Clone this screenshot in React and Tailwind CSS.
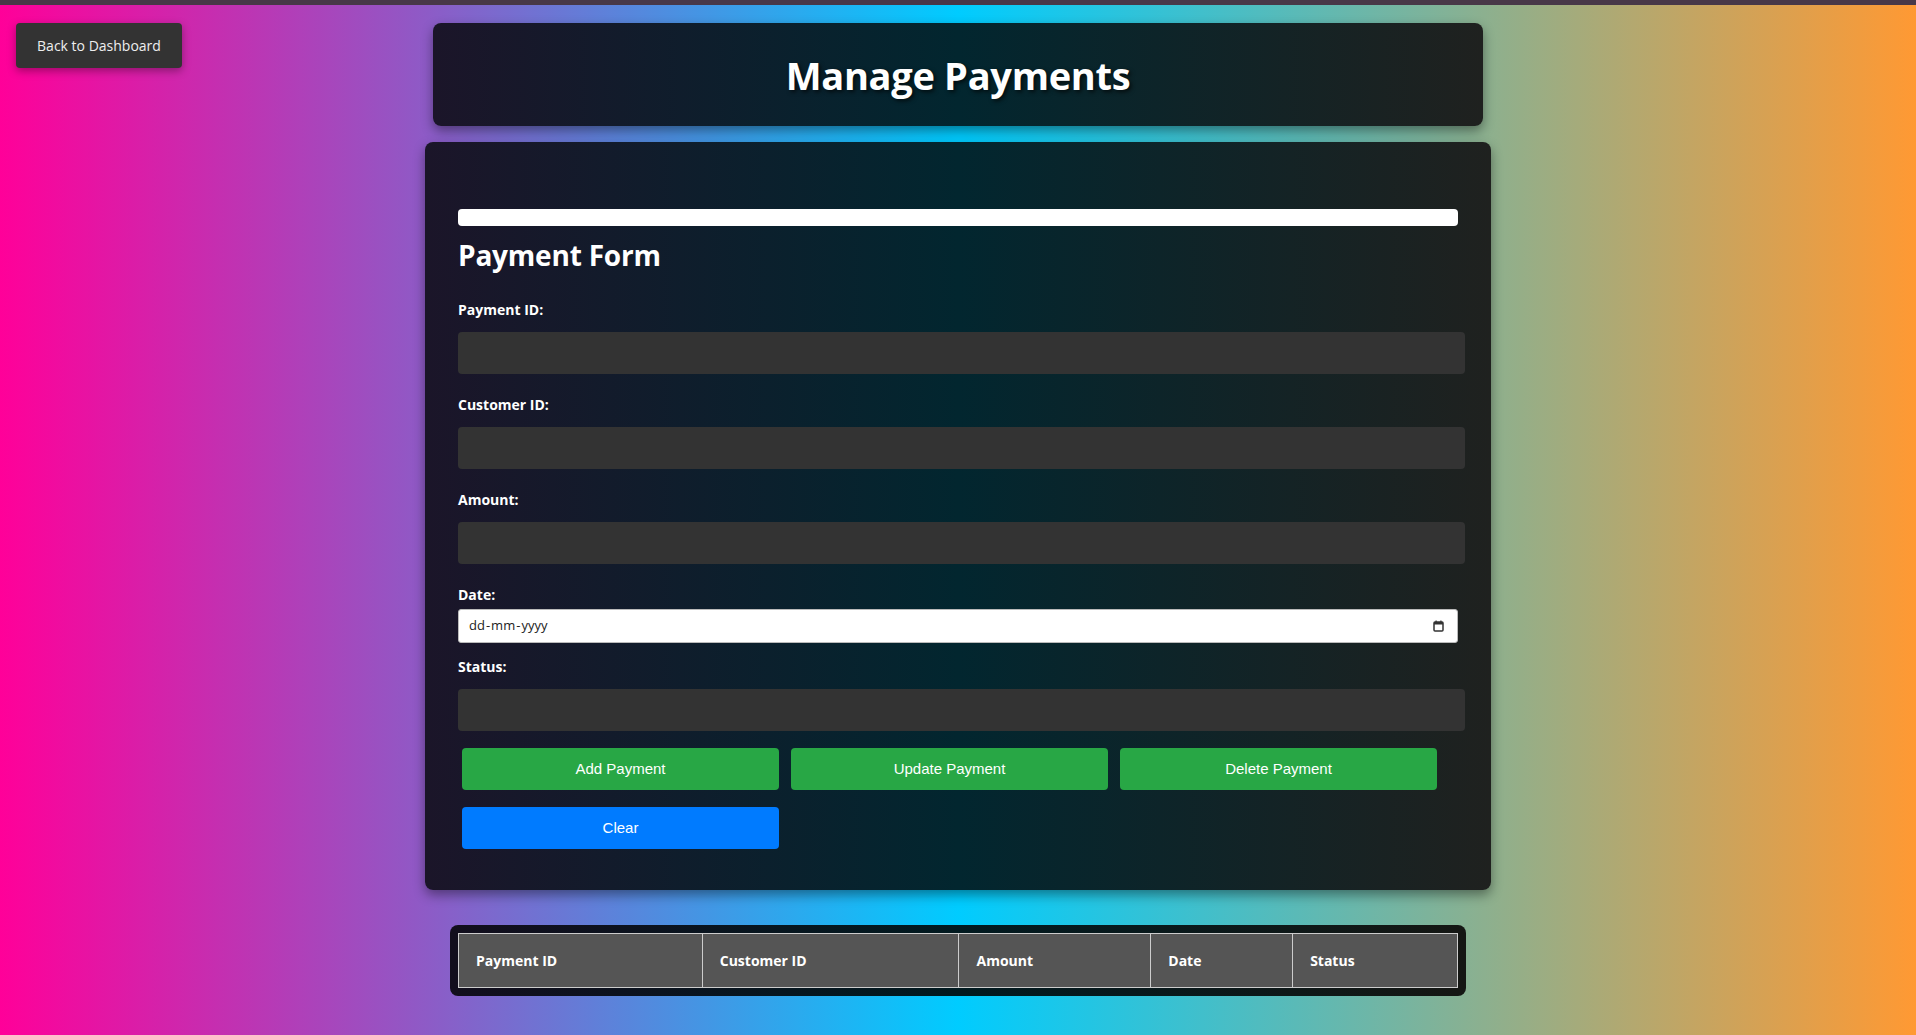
export default function App() {
  const fields = ["Payment ID:", "Customer ID:", "Amount:"]
  const columns = [
    { name: "Payment ID", width: "w-[244px]" },
    { name: "Customer ID", width: "w-[257px]" },
    { name: "Amount", width: "w-[192px]" },
    { name: "Date", width: "w-[142px]" },
    { name: "Status", width: "w-[165px]" },
  ]

  const cardBg =
    "bg-[linear-gradient(to_right,#1b1529,#02262f_50%,#1f211f)]"

  return (
    <div className="relative min-h-screen border-t-[5px] border-[#483848] bg-[linear-gradient(to_right,#ff0099,#00ccff,#ff9933)] font-['Open_Sans',sans-serif] text-white">
      <button className="absolute left-4 top-[18px] flex h-[45px] w-[166px] items-center justify-center rounded-[4px] bg-[#333] text-[14px] text-[#eee] shadow-[0_3px_8px_rgba(0,0,0,0.35)]">
        Back to Dashboard
      </button>

      <div className="flex flex-col items-center pb-10 pt-[18px]">
        <header
          className={`flex h-[103px] w-[1050px] items-center justify-center rounded-lg ${cardBg} shadow-[0_5px_12px_rgba(0,0,0,0.4)]`}
        >
          <h1 className="text-[38px] font-bold leading-none tracking-[-0.3px] [text-shadow:2px_2px_4px_rgba(0,0,0,0.7)]">
            Manage Payments
          </h1>
        </header>

        <div
          className={`mt-4 w-[1066px] rounded-lg ${cardBg} px-[33px] pb-[41px] pt-[67px] shadow-[0_5px_12px_rgba(0,0,0,0.4)]`}
        >
          <div className="h-[17px] w-[1000px] rounded-[4px] bg-white" />

          <h2 className="mt-3 text-[28px] font-bold leading-[34px] tracking-[-0.2px]">
            Payment Form
          </h2>

          <div className="mt-[28px]">
            {fields.map((field) => (
              <div key={field} className="mb-[21px]">
                <label className="block text-[14px] font-bold leading-5">
                  {field}
                </label>
                <div className="mt-3 h-[42px] w-[1007px] rounded-[4px] bg-[#333]" />
              </div>
            ))}
          </div>

          <label className="mt-[1px] block text-[14px] font-bold leading-5">
            Date:
          </label>
          <div className="mt-1 flex h-[34px] w-[1000px] items-center justify-between rounded-[3px] border border-[#bbb] bg-white pl-[10px] pr-[13px] text-[13px] text-[#222]">
            <span>
              dd<span className="px-[1px]">-</span>mm<span className="px-[1px]">-</span>yyyy
            </span>
            <svg width="11" height="12" viewBox="0 0 11 12">
              <rect x="1" y="2" width="9" height="9" rx="1" fill="none" stroke="#333" strokeWidth="1.5" />
              <rect x="1" y="2" width="9" height="2.5" fill="#333" />
              <rect x="2.5" y="0.5" width="1.2" height="2" fill="#333" />
              <rect x="7.3" y="0.5" width="1.2" height="2" fill="#333" />
            </svg>
          </div>

          <label className="mt-[14px] block text-[14px] font-bold leading-5">
            Status:
          </label>
          <div className="mt-3 h-[42px] w-[1007px] rounded-[4px] bg-[#333]" />

          <div className="ml-1 mt-[17px] flex flex-wrap gap-x-3 gap-y-[17px] font-['Liberation_Sans',Arial,sans-serif] text-[15px]">
            <button className="h-[42px] w-[317px] rounded-[4px] bg-[#28a745]">
              Add Payment
            </button>
            <button className="h-[42px] w-[317px] rounded-[4px] bg-[#28a745]">
              Update Payment
            </button>
            <button className="h-[42px] w-[317px] rounded-[4px] bg-[#28a745]">
              Delete Payment
            </button>
            <button className="h-[42px] w-[317px] rounded-[4px] bg-[#007bff]">
              Clear
            </button>
          </div>
        </div>

        <div className="mt-[35px] rounded-lg bg-[linear-gradient(to_right,#120e1d,#011a20_50%,#151714)] p-2">
          <table className="w-[1000px] border-collapse border border-[#ddd]">
            <thead>
              <tr className="h-[54px] bg-[#555]">
                {columns.map((col) => (
                  <th
                    key={col.name}
                    className={`${col.width} border border-[#ccc] pl-[17px] text-left text-[14px] font-bold`}
                  >
                    {col.name}
                  </th>
                ))}
              </tr>
            </thead>
          </table>
        </div>
      </div>
    </div>
  )
}
